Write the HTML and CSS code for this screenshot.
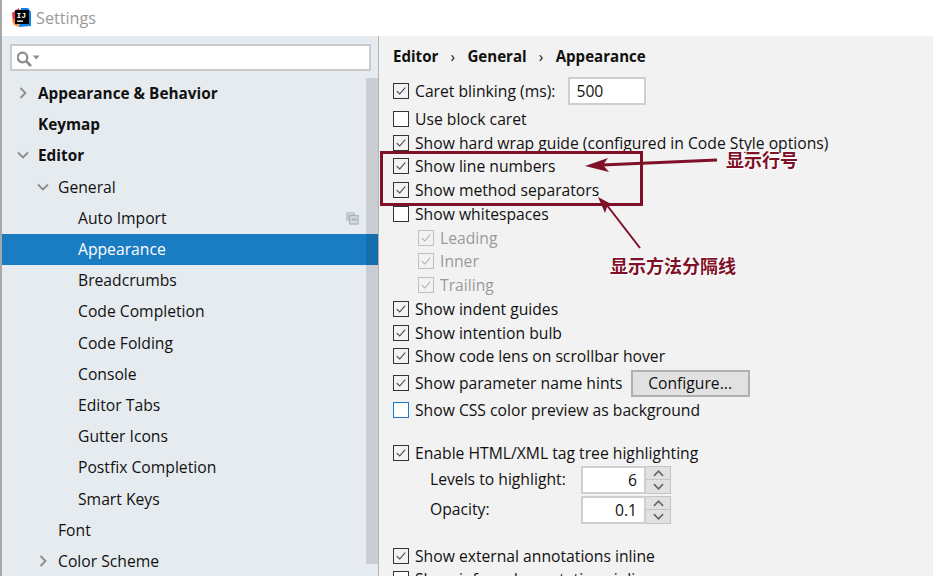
FILE: index.html
```html
<!DOCTYPE html>
<html lang="en">
<head>
<meta charset="utf-8">
<title>Settings</title>
<link rel="stylesheet" href="styles.css">
</head>
<body>
<svg class="defs" width="0" height="0" aria-hidden="true">
  <symbol id="chev-r" viewBox="0 0 12 12"><path d="M3.5 1 L8.5 6 L3.5 11" fill="none" stroke="currentColor" stroke-width="1.8"/></symbol>
  <symbol id="chev-d" viewBox="0 0 12 12"><path d="M1 3.5 L6 8.5 L11 3.5" fill="none" stroke="currentColor" stroke-width="1.8"/></symbol>
  <symbol id="tick" viewBox="0 0 16 16"><path d="M3.2 8.2 L6.5 11.4 L12.8 4.2" fill="none" stroke="currentColor" stroke-width="1.2"/></symbol>
</svg>
<div class="app">
  <header class="titlebar">
    <svg class="logo" width="20" height="20" viewBox="0 0 20 20">
      <path d="M1 5 L8 0 L10 9 L2 15 Z" fill="#f0304f"/>
      <path d="M1 12 L6 10 L8 19 L3 17 Z" fill="#fb8a2c"/>
      <path d="M10 0 L17 0 L20 4 L20 18 L8 19 Z" fill="#0e82e8"/>
      <rect x="4" y="2" width="14" height="14" fill="#000"/>
      <rect x="6" y="12.5" width="6" height="1.3" fill="#fff"/>
      <text x="5.5" y="10" class="logo-text">IJ</text>
    </svg>
    <span class="title">Settings</span>
  </header>
  <div class="main">
    <aside class="sidebar">
      <div class="search">
        <svg width="26" height="18" viewBox="0 0 26 18">
          <circle cx="5.5" cy="8.5" r="4.8" fill="none" stroke="#8c8c8c" stroke-width="2.2"/>
          <path d="M9 12 L14 17" stroke="#8c8c8c" stroke-width="2.6"/>
          <path d="M16 6.5 L22.5 6.5 L19.2 10.5 Z" fill="#8c8c8c"/>
        </svg>
      </div>
      <nav class="tree">
        <div class="node bold l0"><svg class="chev"><use href="#chev-r"/></svg>Appearance &amp; Behavior</div>
        <div class="node bold l0">Keymap</div>
        <div class="node bold l0"><svg class="chev"><use href="#chev-d"/></svg>Editor</div>
        <div class="node l1"><svg class="chev"><use href="#chev-d"/></svg>General</div>
        <div class="node l2">Auto Import
          <svg class="copy" width="13" height="13" viewBox="0 0 13 13"><path d="M1 1 H8 V3 H3 V8 H1 Z" fill="none" stroke="#a9b3ba" stroke-width="1.2"/><rect x="3.6" y="3.6" width="8.4" height="8.4" fill="#d5dbe0" stroke="#a9b3ba" stroke-width="1.2"/><rect x="5.5" y="6.5" width="5" height="2" fill="#a9b3ba"/></svg>
        </div>
        <div class="node l2 selected">Appearance</div>
        <div class="node l2">Breadcrumbs</div>
        <div class="node l2">Code Completion</div>
        <div class="node l2">Code Folding</div>
        <div class="node l2">Console</div>
        <div class="node l2">Editor Tabs</div>
        <div class="node l2">Gutter Icons</div>
        <div class="node l2">Postfix Completion</div>
        <div class="node l2">Smart Keys</div>
        <div class="node l1">Font</div>
        <div class="node l1"><svg class="chev"><use href="#chev-r"/></svg>Color Scheme</div>
      </nav>
      <div class="scrollbar"></div>
    </aside>
    <section class="content">
      <div class="crumbs">Editor<span class="sep">›</span>General<span class="sep">›</span>Appearance</div>
      <div class="row first"><span class="cb on"><svg><use href="#tick"/></svg></span>Caret blinking (ms):<span class="input">500</span></div>
      <div class="row"><span class="cb"></span>Use block caret</div>
      <div class="row"><span class="cb on"><svg><use href="#tick"/></svg></span>Show hard wrap guide (configured in Code Style options)</div>
      <div class="row"><span class="cb on"><svg><use href="#tick"/></svg></span>Show line numbers</div>
      <div class="row"><span class="cb on"><svg><use href="#tick"/></svg></span>Show method separators</div>
      <div class="row"><span class="cb"></span>Show whitespaces</div>
      <div class="row sub off"><span class="cb on"><svg><use href="#tick"/></svg></span>Leading</div>
      <div class="row sub off"><span class="cb on"><svg><use href="#tick"/></svg></span>Inner</div>
      <div class="row sub off"><span class="cb on"><svg><use href="#tick"/></svg></span>Trailing</div>
      <div class="row"><span class="cb on"><svg><use href="#tick"/></svg></span>Show indent guides</div>
      <div class="row"><span class="cb on"><svg><use href="#tick"/></svg></span>Show intention bulb</div>
      <div class="row"><span class="cb on"><svg><use href="#tick"/></svg></span>Show code lens on scrollbar hover</div>
      <div class="row tall"><span class="cb on"><svg><use href="#tick"/></svg></span>Show parameter name hints<span class="button">Configure...</span></div>
      <div class="row"><span class="cb focus"></span>Show CSS color preview as background</div>
      <div class="row gap"><span class="cb on"><svg><use href="#tick"/></svg></span>Enable HTML/XML tag tree highlighting</div>
      <div class="row tall field"><span class="label">Levels to highlight:</span><span class="spin"><span class="value">6</span><span class="arrows"><span class="arrow"><svg><use href="#chev-d"/></svg></span><span class="arrow"><svg><use href="#chev-d"/></svg></span></span></span></div>
      <div class="row tall field"><span class="label">Opacity:</span><span class="spin"><span class="value">0.1</span><span class="arrows"><span class="arrow"><svg><use href="#chev-d"/></svg></span><span class="arrow"><svg><use href="#chev-d"/></svg></span></span></span></div>
      <div class="row gap"><span class="cb on"><svg><use href="#tick"/></svg></span>Show external annotations inline</div>
      <div class="row"><span class="cb"></span>Show inferred annotations inline</div>
    </section>
  </div>
  <div class="mark-box"></div>
  <svg class="arrows-layer" width="933" height="576" viewBox="0 0 933 576">
    <path d="M717 160 L602 165" stroke="#7f1028" stroke-width="3" fill="none"/>
    <path d="M585 166 L608 158 L603 165 L609 172 Z" fill="#7f1028"/>
    <path d="M640 248 L606 204" stroke="#7f1028" stroke-width="2" fill="none"/>
    <path d="M598 197 L613 205 L607 207 L605 213 Z" fill="#7f1028"/>
  </svg>
  <div class="note note-a">显示行号</div>
  <div class="note note-b">显示方法分隔线</div>
</div>
</body>
</html>
```
FILE: styles.css
```css
* { box-sizing: border-box; }
html, body { margin: 0; padding: 0; }
body {
  width: 933px; height: 576px; overflow: hidden;
  font-family: "Open Sans", "Noto Sans", sans-serif;
  font-size: 15.7px; color: #111; background: #fff;
}
.defs { position: absolute; }
.app { position: relative; width: 933px; height: 576px; display: flex; flex-direction: column; overflow: hidden; border-left: 2px solid #a8a8a8; }
.titlebar { height: 36px; flex: none; background: #fff; display: flex; align-items: center; padding-left: 9px; }
.logo { flex: none; margin-right: 5px; }
.logo-text { font: bold 8px "Liberation Mono", monospace; fill: #fff; }
.title { font-size: 16.2px; color: #9a9a9a; }
.main { flex: 1; display: flex; min-height: 0; }
.sidebar { position: relative; width: 377px; flex: none; background: #e6ebf0; border-right: 1px solid #b4b4b4; }
.search { margin: 8px 7px 0 8px; height: 27px; background: #fff; border: 2px solid #c9cccf; display: flex; align-items: center; padding-left: 5px; }
.tree { margin-top: 7px; }
.node { position: relative; height: 31.2px; padding-bottom: 1px; display: flex; align-items: center; white-space: nowrap; }
.bold { font-weight: 700; font-size: 15.35px; }
.l0 { padding-left: 36px; }
.l1 { padding-left: 56px; }
.l2 { padding-left: 76px; }
.chev { position: absolute; width: 12px; height: 12px; top: 9px; color: #8c8c8c; }
.l0 .chev { left: 15px; }
.l1 .chev { left: 35px; }
.copy { position: absolute; left: 344px; top: 9px; }
.selected { background: #1a7dc4; color: #fff; }
.scrollbar { position: absolute; left: 364px; top: 42px; width: 12px; height: 486px; background: rgba(0, 0, 0, .12); }
.content { flex: 1; background: #f2f2f2; padding-left: 14px; min-width: 0; }
.crumbs { height: 41px; padding-top: 8px; font-weight: 700; font-size: 15.1px; line-height: 24px; }
.sep { display: inline-block; width: 29px; text-align: center; font-weight: 400; }
.row { height: 23.75px; display: flex; align-items: center; white-space: nowrap; }
.row.first { height: 28px; margin-bottom: 2px; }
.row.tall { height: 30px; }
.row.gap { margin-top: 19px; }
.cb { flex: none; width: 16px; height: 16px; margin-right: 6px; border: 1px solid #333; background: #fff; color: #444; display: block; }
.cb svg { display: block; width: 14px; height: 14px; }
.cb.on { background: transparent; }
.cb.focus { border-color: #1a7ad4; }
.sub { padding-left: 25px; }
.off { color: #9a9a9a; }
.off .cb { border-color: #c0c0c0; color: #b0b0b0; }
.input { margin-left: 13px; width: 78px; height: 28px; background: #fff; border: 2px solid #cfcfcf; padding-left: 6px; line-height: 24px; }
.button { margin-left: 8px; width: 119px; height: 27px; background: #e1e1e1; border: 2px solid #b0b0b0; text-align: center; line-height: 23px; }
.field { padding-left: 37px; }
.label { width: 151px; margin-bottom: 2px; }
.spin { display: flex; height: 28px; }
.value { width: 65px; background: #fff; border: 2px solid #cfcfcf; text-align: right; padding-right: 7px; line-height: 24px; }
.arrows { width: 25px; display: flex; flex-direction: column; background: #e1e1e1; border: 1px solid #c4c4c4; border-left: 0; }
.arrow { flex: 1; display: flex; align-items: center; justify-content: center; color: #666; }
.arrow + .arrow { border-top: 1px solid #c4c4c4; }
.arrow svg { width: 11px; height: 11px; }
.arrow:first-child svg { transform: scaleY(-1); }
.mark-box { position: absolute; left: 378px; top: 151px; width: 263px; height: 55px; border: 3px solid #7f1028; }
.arrows-layer { position: absolute; left: -2px; top: 0; }
.note { position: absolute; font-family: "Liberation Serif", "Noto Sans CJK SC", serif; font-weight: 700; font-size: 18px; line-height: 18px; color: #7f1028; text-shadow: 1px 1px 1px #fff, -1px -1px 1px #fff; }
.note-a { left: 724px; top: 152px; }
.note-b { left: 608px; top: 258px; }
```
